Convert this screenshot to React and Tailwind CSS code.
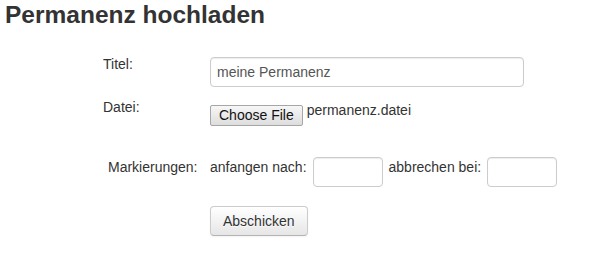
import React from "react"

const font = { fontFamily: '"Liberation Sans", Arial, sans-serif' }

function TextInput({ value, width }) {
  return (
    <input
      type="text"
      defaultValue={value}
      className={`${width} h-[30px] rounded-[4px] border border-[#cccccc] bg-white px-[6px] text-[14px] text-[#555555] shadow-[inset_0_1px_1px_rgba(0,0,0,0.075)] outline-none`}
    />
  )
}

export default function App() {
  return (
    <div className="min-h-[260px] w-[591px] bg-white pt-[2px] text-[#333333]" style={font}>
      <h2 className="pl-[5px] text-[24.5px] font-bold leading-[25px]">Permanenz hochladen</h2>

      <div className="mt-[27px] pl-[103px] text-[14px] leading-5">
        <div className="flex items-start">
          <div className="w-[107px]">Titel:</div>
          <div className="mt-[3px]">
            <TextInput value="meine Permanenz" width="w-[314px] h-[29px]" />
          </div>
        </div>

        <div className="mt-[10px] flex items-start">
          <div className="w-[107px]">Datei:</div>
          <div className="mt-[8px] flex items-start">
            <button className="h-[21px] rounded-[2px] border border-[#a6a6a6] bg-gradient-to-b from-[#f7f7f7] to-[#dddddd] px-[8px] text-[14px] leading-[19px] text-[#111111]">
              Choose File
            </button>
            <span className="ml-[4px] mt-[-5px]">permanenz.datei</span>
          </div>
        </div>

        <div className="mt-[31px] flex items-start">
          <div className="w-[107px] pl-[5px]">Markierungen:</div>
          <div className="flex items-start">
            <span>anfangen nach:</span>
            <div className="ml-[6px]">
              <TextInput value="" width="w-[70px]" />
            </div>
            <span className="ml-[6px]">abbrechen bei:</span>
            <div className="ml-[6px]">
              <TextInput value="" width="w-[70px]" />
            </div>
          </div>
        </div>

        <div className="mt-[19px] pl-[107px]">
          <button className="h-[30px] rounded-[4px] border border-[#cccccc] border-b-[#b3b3b3] bg-gradient-to-b from-white to-[#e6e6e6] px-[12px] text-[14px] leading-5 text-[#333333] shadow-[inset_0_1px_0_rgba(255,255,255,0.2),0_1px_2px_rgba(0,0,0,0.05)] [text-shadow:0_1px_1px_rgba(255,255,255,0.75)]">
            Abschicken
          </button>
        </div>
      </div>
    </div>
  )
}
